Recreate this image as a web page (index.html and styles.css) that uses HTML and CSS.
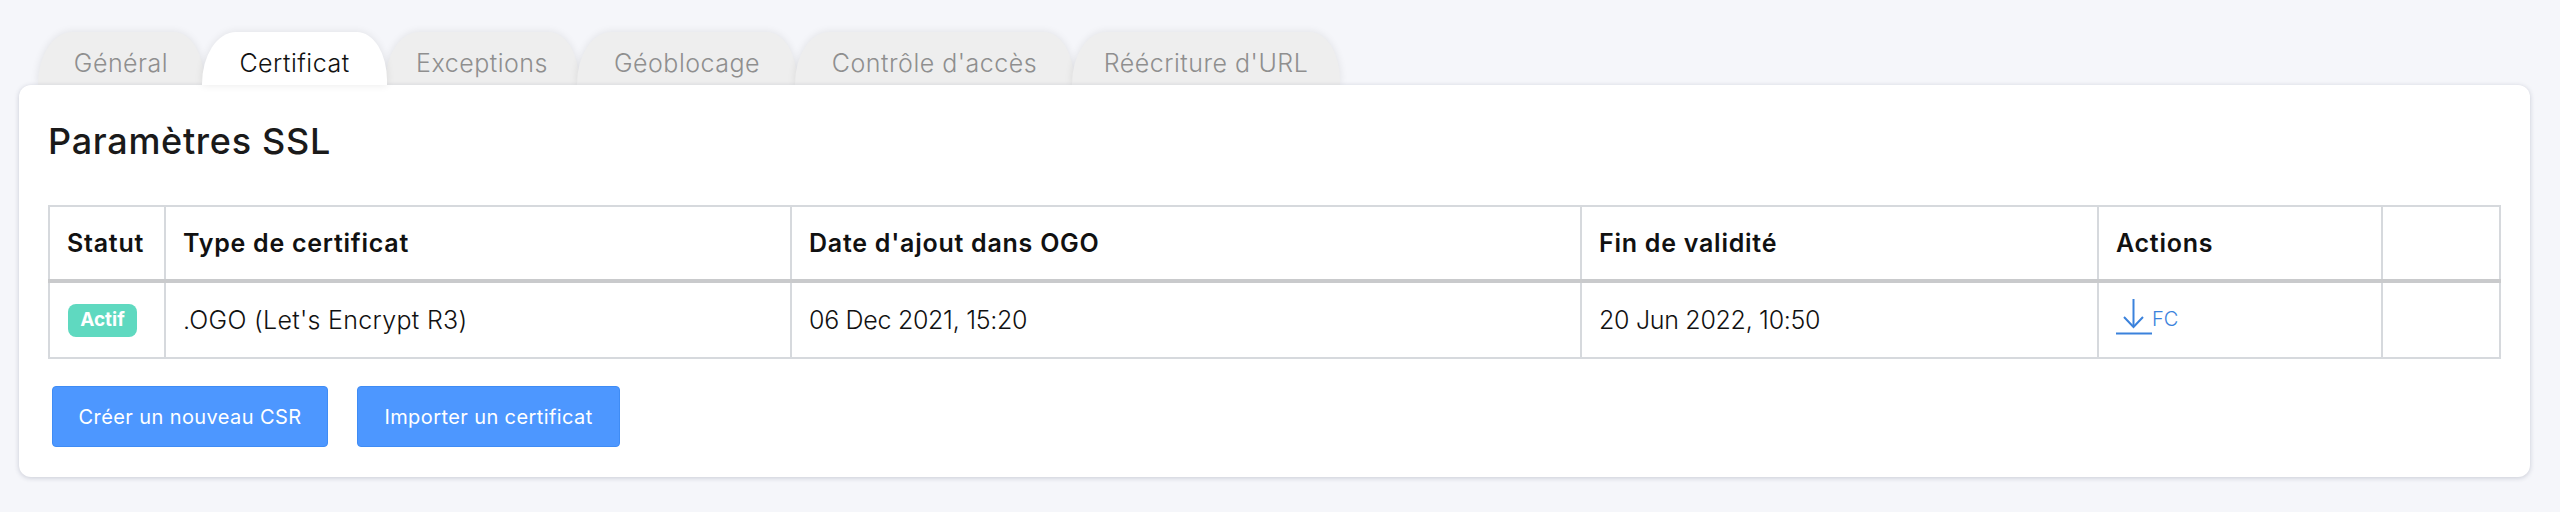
FILE: index.html
```
<!DOCTYPE html>
<html lang="fr">
<head>
<meta charset="utf-8">
<title>Paramètres SSL</title>
<link rel="stylesheet" href="styles.css">
</head>
<body>
<nav class="tabs">
  <a class="tab tab-general">Général</a>
  <a class="tab tab-cert active">Certificat</a>
  <a class="tab tab-exc">Exceptions</a>
  <a class="tab tab-geo">Géoblocage</a>
  <a class="tab tab-acc">Contrôle d'accès</a>
  <a class="tab tab-url">Réécriture d'URL</a>
</nav>
<main class="card">
  <h1 class="title">Paramètres SSL</h1>
  <table class="ssl">
    <colgroup>
      <col class="c1"><col class="c2"><col class="c3"><col class="c4"><col class="c5"><col class="c6">
    </colgroup>
    <thead>
      <tr><th>Statut</th><th>Type de certificat</th><th>Date d'ajout dans OGO</th><th>Fin de validité</th><th>Actions</th><th></th></tr>
    </thead>
    <tbody>
      <tr>
        <td><span class="badge">Actif</span></td>
        <td>.OGO (Let's Encrypt R3)</td>
        <td class="date">06 Dec 2021, 15:20</td>
        <td class="date">20 Jun 2022, 10:50</td>
        <td>
          <a class="dl">
            <svg class="dl-icon" width="36" height="36" viewBox="0 0 36 36" fill="none" stroke="#3b82dc" stroke-width="2">
              <path d="M17.5 0V28"/><path d="M8 18L17.5 28L27 18"/><path d="M0 34.500H36"/>
            </svg>
            <span class="dl-label">FC</span>
          </a>
        </td>
        <td></td>
      </tr>
    </tbody>
  </table>
  <div class="actions">
    <button class="btn btn-csr">Créer un nouveau CSR</button>
    <button class="btn btn-imp">Importer un certificat</button>
  </div>
</main>
</body>
</html>
```
FILE: styles.css
```
* { box-sizing: border-box; }
html, body { margin: 0; height: 512px; overflow: hidden; }
body {
  background: #f5f6fa;
  font-family: "Inter", "Liberation Sans", sans-serif;
  color: #111;
  padding: 32px 30px 0 19px;
}
.tabs {
  display: flex;
  height: 53px;
  padding-left: 19px;
  position: relative;
}
.tab {
  height: 53px;
  margin-right: -2px;
  background: #eeeeee;
  border-radius: 34px 30px 0 0 / 52px 48px 0 0;
  box-shadow: 0 0 8px rgba(0, 0, 0, .09);
  color: #8f8f8f;
  font-size: 25px;
  font-weight: 300;
  letter-spacing: .5px;
  line-height: 63px;
  text-align: center;
}
.tab.active { background: #fff; color: #111; position: relative; z-index: 3; }
.tab-general { width: 166px; }
.tab-cert { width: 185px; }
.tab-exc { width: 194px; }
.tab-geo { width: 220px; }
.tab-acc { width: 279px; }
.tab-url { width: 268px; }
.card {
  position: relative;
  z-index: 1;
  height: 392px;
  background: #fff;
  border-radius: 12px;
  box-shadow: 0 1px 5px rgba(40, 50, 80, .22);
  padding: 32px 29px 0 29px;
}
.title {
  margin: 0;
  font-size: 36px;
  font-weight: 500;
  letter-spacing: .7px;
  line-height: 48px;
  color: #1a1a1a;
}
.ssl {
  margin-top: 40px;
  width: 2451px;
  border-collapse: collapse;
  table-layout: fixed;
  font-size: 25px;
}
.c1 { width: 116px; }
.c2 { width: 626px; }
.c3 { width: 790px; }
.c4 { width: 517px; }
.c5 { width: 284px; }
.c6 { width: 118px; }
.ssl th, .ssl td {
  border: 2px solid #d6d9dd;
  padding: 0 17px;
  text-align: left;
}
.ssl th {
  height: 75px;
  font-weight: 600;
  letter-spacing: .75px;
  border-bottom: 4px solid #c9cacc;
  color: #111;
}
.ssl td { height: 77px; font-weight: 300; letter-spacing: .3px; color: #111; }
.ssl td.date { letter-spacing: -.3px; }
.badge {
  display: inline-block;
  vertical-align: middle;
  width: 69px;
  height: 33px;
  margin-left: 1px;
  line-height: 32px;
  border-radius: 8px;
  background: #5fd9c0;
  color: #fff;
  font-size: 19px;
  font-weight: 700;
  letter-spacing: 0;
  text-align: center;
}
.dl { display: inline-flex; align-items: center; color: #3b82dc; font-size: 20px; letter-spacing: 0; }
.dl-icon { display: block; flex: none; }
.dl-label { padding-top: 4px; }
.actions { display: flex; gap: 29px; margin: 27px 0 0 4px; }
.btn {
  height: 61px;
  border: 1px solid #3f8cf5;
  border-radius: 4px;
  background: #4d97ff;
  color: #fff;
  font: 400 20px "Inter", "Liberation Sans", sans-serif;
  letter-spacing: .4px;
  padding: 0;
}
.btn-csr { width: 276px; }
.btn-imp { width: 263px; }
```
